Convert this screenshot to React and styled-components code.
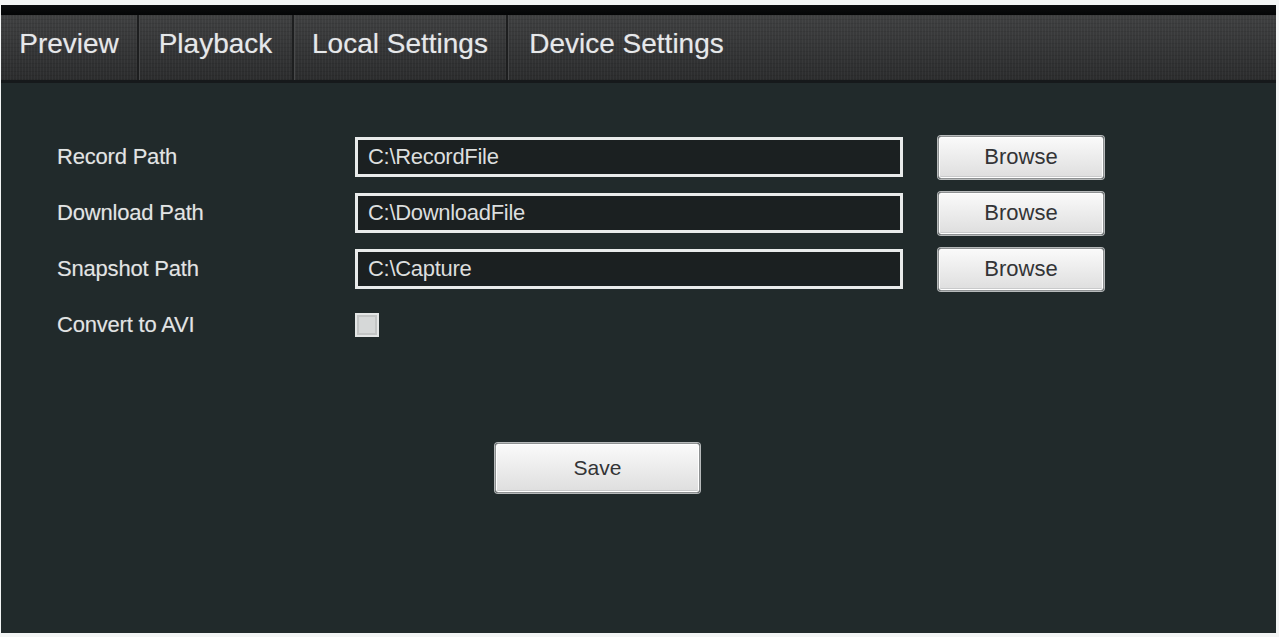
import React from 'react';
import styled, {createGlobalStyle} from 'styled-components';

const GlobalStyle = createGlobalStyle`
  html, body {
    margin: 0;
    padding: 0;
    background: #f3f5f5;
    font-family: "Liberation Sans", Arial, sans-serif;
  }
`;

const Frame = styled.div`
  height: 637px;
  box-sizing: border-box;
  padding: 5px 3px 4px 1px;
  display: flex;
  flex-direction: column;
`;

const TopStrip = styled.div`
  height: 10px;
  background: linear-gradient(#0b0d0f, #040506);
`;

const TabBar = styled.div`
  height: 65px;
  display: flex;
  background:
    repeating-linear-gradient(90deg, rgba(255, 255, 255, 0.035) 0 1px, transparent 1px 3px),
    repeating-linear-gradient(0deg, rgba(0, 0, 0, 0.08) 0 1px, transparent 1px 4px),
    linear-gradient(#3f4041, #333435 60%, #2b2c2d);
  border-bottom: 3px solid #16191b;
`;

const Tab = styled.div`
  width: ${p => p.width}px;
  display: flex;
  align-items: center;
  justify-content: center;
  padding-bottom: 8px;
  box-sizing: border-box;
  font-size: 28px;
  color: #e6e8ea;
  text-shadow: 0 0 1px rgba(255, 255, 255, 0.35);
  border-right: ${p => (p.last ? 'none' : '2px solid #1d1e1f')};
  box-shadow: ${p => (p.last ? 'none' : '1px 0 0 #48494a')};
`;

const Panel = styled.div`
  flex: 1;
  background: #212a2b;
  padding: 54px 0 0 56px;
  display: flex;
  flex-direction: column;
`;

const Form = styled.div`
  display: grid;
  grid-template-columns: 263px 548px 166px;
  grid-auto-rows: 40px;
  column-gap: 35px;
  row-gap: 16px;
  align-items: center;
`;

const Label = styled.div`
  font-size: 22px;
  letter-spacing: -0.2px;
  color: #e2e4e4;
  text-shadow: 0 0 1px rgba(255, 255, 255, 0.25);
`;

const PathField = styled.div`
  height: 40px;
  box-sizing: border-box;
  border: 3px solid #e9ebeb;
  background: #1b2021;
  display: flex;
  align-items: center;
  padding-left: 10px;
  font-size: 22px;
  letter-spacing: -0.3px;
  color: #dcdede;
`;

const Button = styled.button`
  width: ${p => p.width}px;
  height: ${p => p.height}px;
  box-sizing: border-box;
  border: 1px solid #8e9192;
  border-radius: 3px;
  background: linear-gradient(#fafafa, #ececec 50%, #dedede);
  box-shadow: inset 0 0 0 1px #ffffff, inset 0 -2px 0 #c9cacb, 0 0 0 1px #b7babb;
  font-family: "Liberation Sans", Arial, sans-serif;
  font-size: ${p => p.size}px;
  color: #333436;
  padding: 0;
  cursor: pointer;
`;

const Check = styled.div`
  width: 24px;
  height: 24px;
  box-sizing: border-box;
  background: #d6d8d8;
  border: 2px solid #e4e6e6;
  box-shadow: inset 0 0 0 2px #c3c5c5;
`;

const SaveRow = styled.div`
  margin-top: 98px;
  padding-left: 438px;
`;

const tabs = [
  {name: 'Preview', width: 138},
  {name: 'Playback', width: 155},
  {name: 'Local Settings', width: 214},
  {name: 'Device Settings', width: 237},
];

const paths = [
  {label: 'Record Path', value: 'C:\\RecordFile'},
  {label: 'Download Path', value: 'C:\\DownloadFile'},
  {label: 'Snapshot Path', value: 'C:\\Capture'},
];

const App = () => (
  <>
    <GlobalStyle />
    <Frame>
      <TopStrip />
      <TabBar>
        {tabs.map((t, i) => (
          <Tab key={t.name} width={t.width} last={i === tabs.length - 1}>
            {t.name}
          </Tab>
        ))}
      </TabBar>
      <Panel>
        <Form>
          {paths.map(p => (
            <React.Fragment key={p.label}>
              <Label>{p.label}</Label>
              <PathField>{p.value}</PathField>
              <Button width={166} height={43} size={22}>Browse</Button>
            </React.Fragment>
          ))}
          <Label>Convert to AVI</Label>
          <Check />
        </Form>
        <SaveRow>
          <Button width={205} height={50} size={21}>Save</Button>
        </SaveRow>
      </Panel>
    </Frame>
  </>
);

export default App;
